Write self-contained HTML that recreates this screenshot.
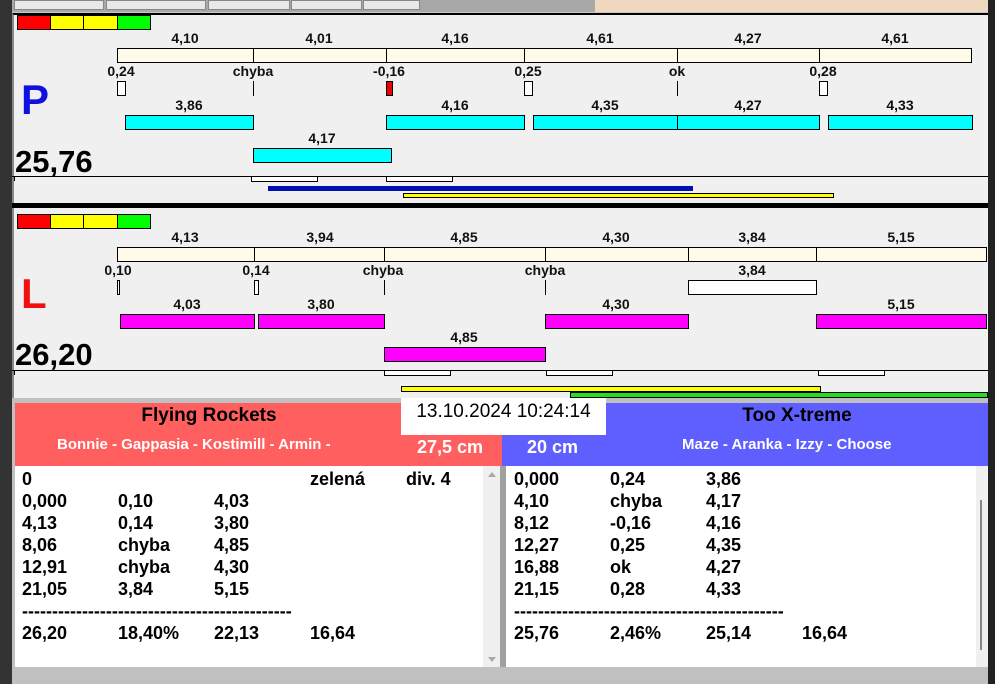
<!DOCTYPE html>
<html><head><meta charset="utf-8"><style>
*{margin:0;padding:0;box-sizing:border-box}
body{width:995px;height:684px;overflow:hidden;background:#c8c8c8;position:relative;font-family:"Liberation Sans",Arial,sans-serif;font-weight:bold}
div{position:absolute}
.l{font-size:14px;color:#111;transform:translateX(-50%);white-space:nowrap;line-height:14px}
.b{border:1px solid #000}
.cr{background:#fffbe8}
.cy{background:#00ffff}
.mg{background:#ff00ff}
.w{background:#fff}
.t{font-size:18px;line-height:22px;color:#000;white-space:pre}
</style></head><body>
<!-- top strip -->
<div style="left:0;top:0;width:995px;height:12px;background:#a8a8a8"></div>
<div style="left:595px;top:0;width:393px;height:12px;background:#f0d8c0"></div>
<div style="left:14px;top:0;width:90px;height:10px;background:#e8e8e8;border:1px solid #888"></div>
<div style="left:106px;top:0;width:100px;height:10px;background:#e8e8e8;border:1px solid #888"></div>
<div style="left:208px;top:0;width:82px;height:10px;background:#e8e8e8;border:1px solid #888"></div>
<div style="left:291px;top:0;width:71px;height:10px;background:#e8e8e8;border:1px solid #888"></div>
<div style="left:363px;top:0;width:57px;height:10px;background:#e8e8e8;border:1px solid #888"></div>
<div style="left:0;top:0;width:12px;height:684px;background:#333"></div>
<div style="left:988px;top:0;width:7px;height:684px;background:#222"></div>

<!-- P panel -->
<div style="left:12px;top:13px;width:976px;height:192px;background:#f0f0f0;border-top:2px solid #000;border-left:2px solid #888"></div>
<div class="b" style="left:17px;top:15px;width:34px;height:15px;background:#f00"></div>
<div class="b" style="left:50px;top:15px;width:34px;height:15px;background:#ff0"></div>
<div class="b" style="left:83px;top:15px;width:35px;height:15px;background:#ff0"></div>
<div class="b" style="left:117px;top:15px;width:34px;height:15px;background:#0f0"></div>
<div class="l" style="left:185px;top:31px">4,10</div><div class="l" style="left:319px;top:31px">4,01</div><div class="l" style="left:455px;top:31px">4,16</div><div class="l" style="left:600px;top:31px">4,61</div><div class="l" style="left:748px;top:31px">4,27</div><div class="l" style="left:895px;top:31px">4,61</div>
<div class="b cr" style="left:117px;top:48px;width:137px;height:15px"></div><div class="b cr" style="left:253px;top:48px;width:134px;height:15px"></div><div class="b cr" style="left:386px;top:48px;width:139px;height:15px"></div><div class="b cr" style="left:524px;top:48px;width:154px;height:15px"></div><div class="b cr" style="left:677px;top:48px;width:143px;height:15px"></div><div class="b cr" style="left:819px;top:48px;width:153px;height:15px"></div>
<div class="l" style="left:121px;top:64px">0,24</div><div class="l" style="left:253px;top:64px">chyba</div><div class="l" style="left:389px;top:64px">-0,16</div><div class="l" style="left:528px;top:64px">0,25</div><div class="l" style="left:677px;top:64px">ok</div><div class="l" style="left:823px;top:64px">0,28</div>
<div class="b w" style="left:117px;top:81px;width:9px;height:15px"></div><div style="left:253px;top:81px;width:1px;height:15px;background:#000"></div><div class="b" style="left:386px;top:81px;width:7px;height:15px;background:#e00"></div><div class="b w" style="left:524px;top:81px;width:9px;height:15px"></div><div style="left:677px;top:81px;width:1px;height:15px;background:#000"></div><div class="b w" style="left:819px;top:81px;width:9px;height:15px"></div>
<div class="l" style="left:189px;top:98px">3,86</div><div class="l" style="left:455px;top:98px">4,16</div><div class="l" style="left:605px;top:98px">4,35</div><div class="l" style="left:748px;top:98px">4,27</div><div class="l" style="left:900px;top:98px">4,33</div>
<div class="b cy" style="left:125px;top:115px;width:129px;height:15px"></div><div class="b cy" style="left:386px;top:115px;width:139px;height:15px"></div><div class="b cy" style="left:533px;top:115px;width:145px;height:15px"></div><div class="b cy" style="left:677px;top:115px;width:143px;height:15px"></div><div class="b cy" style="left:828px;top:115px;width:145px;height:15px"></div>
<div class="l" style="left:322px;top:131px">4,17</div>
<div class="b cy" style="left:253px;top:148px;width:139px;height:15px"></div>
<div style="left:21px;top:76px;font-size:42px;color:#1010e0;line-height:48px">P</div>
<div style="left:15px;top:145px;font-size:31px;color:#000;line-height:34px">25,76</div>
<div style="left:12px;top:176px;width:976px;height:1px;background:#000"></div>
<div style="left:14px;top:176px;width:1px;height:5px;background:#000"></div>
<div class="b w" style="left:251px;top:176px;width:67px;height:6px"></div><div class="b w" style="left:386px;top:176px;width:67px;height:6px"></div>
<div style="left:268px;top:186px;width:425px;height:5px;background:#0010b0"></div>
<div class="b" style="left:403px;top:193px;width:431px;height:5px;background:#ff0"></div>
<div style="left:12px;top:203px;width:976px;height:5px;background:#000"></div>

<!-- L panel -->
<div style="left:12px;top:208px;width:976px;height:190px;background:#f0f0f0;border-left:2px solid #888"></div>
<div class="b" style="left:17px;top:214px;width:34px;height:15px;background:#f00"></div>
<div class="b" style="left:50px;top:214px;width:34px;height:15px;background:#ff0"></div>
<div class="b" style="left:83px;top:214px;width:35px;height:15px;background:#ff0"></div>
<div class="b" style="left:117px;top:214px;width:34px;height:15px;background:#0f0"></div>
<div class="l" style="left:185px;top:230px">4,13</div><div class="l" style="left:320px;top:230px">3,94</div><div class="l" style="left:464px;top:230px">4,85</div><div class="l" style="left:616px;top:230px">4,30</div><div class="l" style="left:752px;top:230px">3,84</div><div class="l" style="left:901px;top:230px">5,15</div>
<div class="b cr" style="left:117px;top:247px;width:138px;height:15px"></div><div class="b cr" style="left:254px;top:247px;width:131px;height:15px"></div><div class="b cr" style="left:384px;top:247px;width:162px;height:15px"></div><div class="b cr" style="left:545px;top:247px;width:144px;height:15px"></div><div class="b cr" style="left:688px;top:247px;width:129px;height:15px"></div><div class="b cr" style="left:816px;top:247px;width:171px;height:15px"></div>
<div class="l" style="left:118px;top:263px">0,10</div><div class="l" style="left:256px;top:263px">0,14</div><div class="l" style="left:383px;top:263px">chyba</div><div class="l" style="left:545px;top:263px">chyba</div><div class="l" style="left:752px;top:263px">3,84</div>
<div class="b w" style="left:117px;top:280px;width:3px;height:15px"></div><div class="b w" style="left:254px;top:280px;width:5px;height:15px"></div><div style="left:384px;top:280px;width:1px;height:15px;background:#000"></div><div style="left:545px;top:280px;width:1px;height:15px;background:#000"></div><div class="b w" style="left:688px;top:280px;width:129px;height:15px"></div>
<div class="l" style="left:187px;top:297px">4,03</div><div class="l" style="left:321px;top:297px">3,80</div><div class="l" style="left:616px;top:297px">4,30</div><div class="l" style="left:901px;top:297px">5,15</div>
<div class="b mg" style="left:120px;top:314px;width:135px;height:15px"></div><div class="b mg" style="left:258px;top:314px;width:127px;height:15px"></div><div class="b mg" style="left:545px;top:314px;width:144px;height:15px"></div><div class="b mg" style="left:816px;top:314px;width:171px;height:15px"></div>
<div class="l" style="left:464px;top:330px">4,85</div>
<div class="b mg" style="left:384px;top:347px;width:162px;height:15px"></div>
<div style="left:21px;top:270px;font-size:42px;color:#f01010;line-height:48px">L</div>
<div style="left:15px;top:338px;font-size:31px;color:#000;line-height:34px">26,20</div>
<div style="left:12px;top:370px;width:976px;height:1px;background:#000"></div>
<div style="left:14px;top:370px;width:1px;height:5px;background:#000"></div>
<div class="b w" style="left:384px;top:370px;width:67px;height:6px"></div><div class="b w" style="left:546px;top:370px;width:67px;height:6px"></div><div class="b w" style="left:818px;top:370px;width:67px;height:6px"></div>
<div class="b" style="left:401px;top:386px;width:420px;height:6px;background:#ff0"></div>
<div class="b" style="left:570px;top:392px;width:418px;height:6px;background:#22dd22"></div>

<!-- bottom -->
<div style="left:12px;top:398px;width:976px;height:286px;background:#c0c0c0"></div>
<div style="left:15px;top:403px;width:487px;height:63px;background:#ff5f5f"></div>
<div style="left:502px;top:403px;width:486px;height:63px;background:#5f5fff"></div>
<div style="left:401px;top:398px;width:205px;height:37px;background:#fff"></div>
<div style="left:401px;top:400px;width:205px;text-align:center;font-size:19px;font-weight:normal;color:#000;line-height:24px">13.10.2024 10:24:14</div>
<div style="left:109px;top:404px;width:200px;text-align:center;font-size:19px;color:#000;line-height:24px">Flying Rockets</div>
<div style="left:697px;top:404px;width:200px;text-align:center;font-size:19px;color:#000;line-height:24px">Too X-treme</div>
<div style="left:57px;top:436px;font-size:15px;color:#fff;line-height:18px;white-space:nowrap">Bonnie - Gappasia - Kostimill - Armin -</div>
<div style="left:417px;top:436px;font-size:18px;color:#fff;line-height:22px;white-space:nowrap">27,5 cm</div>
<div style="left:527px;top:436px;font-size:18px;color:#fff;line-height:22px;white-space:nowrap">20 cm</div>
<div style="left:682px;top:436px;font-size:15px;color:#fff;line-height:18px;white-space:nowrap">Maze - Aranka - Izzy - Choose</div>

<div style="left:15px;top:466px;width:468px;height:201px;background:#fff"></div>
<div style="left:483px;top:466px;width:17px;height:201px;background:#f0f0f0"></div>
<div style="left:488px;top:472px;width:0;height:0;border:4px solid transparent;border-bottom:5px solid #aaa;border-top:0"></div>
<div style="left:488px;top:657px;width:0;height:0;border:4px solid transparent;border-top:5px solid #aaa;border-bottom:0"></div>
<div style="left:500px;top:466px;width:6px;height:201px;background:#a0a0a0"></div>
<div style="left:506px;top:466px;width:470px;height:201px;background:#fff"></div>
<div style="left:976px;top:466px;width:12px;height:201px;background:#f0f0f0"></div>
<div style="left:980px;top:500px;width:2px;height:150px;background:#888"></div>

<div class="t" style="left:22px;top:468px">0</div><div class="t" style="left:310px;top:468px">zelená</div><div class="t" style="left:406px;top:468px">div. 4</div>
<div class="t" style="left:22px;top:490px">0,000
4,13
8,06
12,91
21,05</div>
<div class="t" style="left:118px;top:490px">0,10
0,14
chyba
chyba
3,84</div>
<div class="t" style="left:214px;top:490px">4,03
3,80
4,85
4,30
5,15</div>
<div class="t" style="left:22px;top:600px">---------------------------------------------</div>
<div class="t" style="left:22px;top:622px">26,20</div><div class="t" style="left:118px;top:622px">18,40%</div><div class="t" style="left:214px;top:622px">22,13</div><div class="t" style="left:310px;top:622px">16,64</div>

<div class="t" style="left:514px;top:468px">0,000
4,10
8,12
12,27
16,88
21,15</div>
<div class="t" style="left:610px;top:468px">0,24
chyba
-0,16
0,25
ok
0,28</div>
<div class="t" style="left:706px;top:468px">3,86
4,17
4,16
4,35
4,27
4,33</div>
<div class="t" style="left:514px;top:600px">---------------------------------------------</div>
<div class="t" style="left:514px;top:622px">25,76</div><div class="t" style="left:610px;top:622px">2,46%</div><div class="t" style="left:706px;top:622px">25,14</div><div class="t" style="left:802px;top:622px">16,64</div>
</body></html>
